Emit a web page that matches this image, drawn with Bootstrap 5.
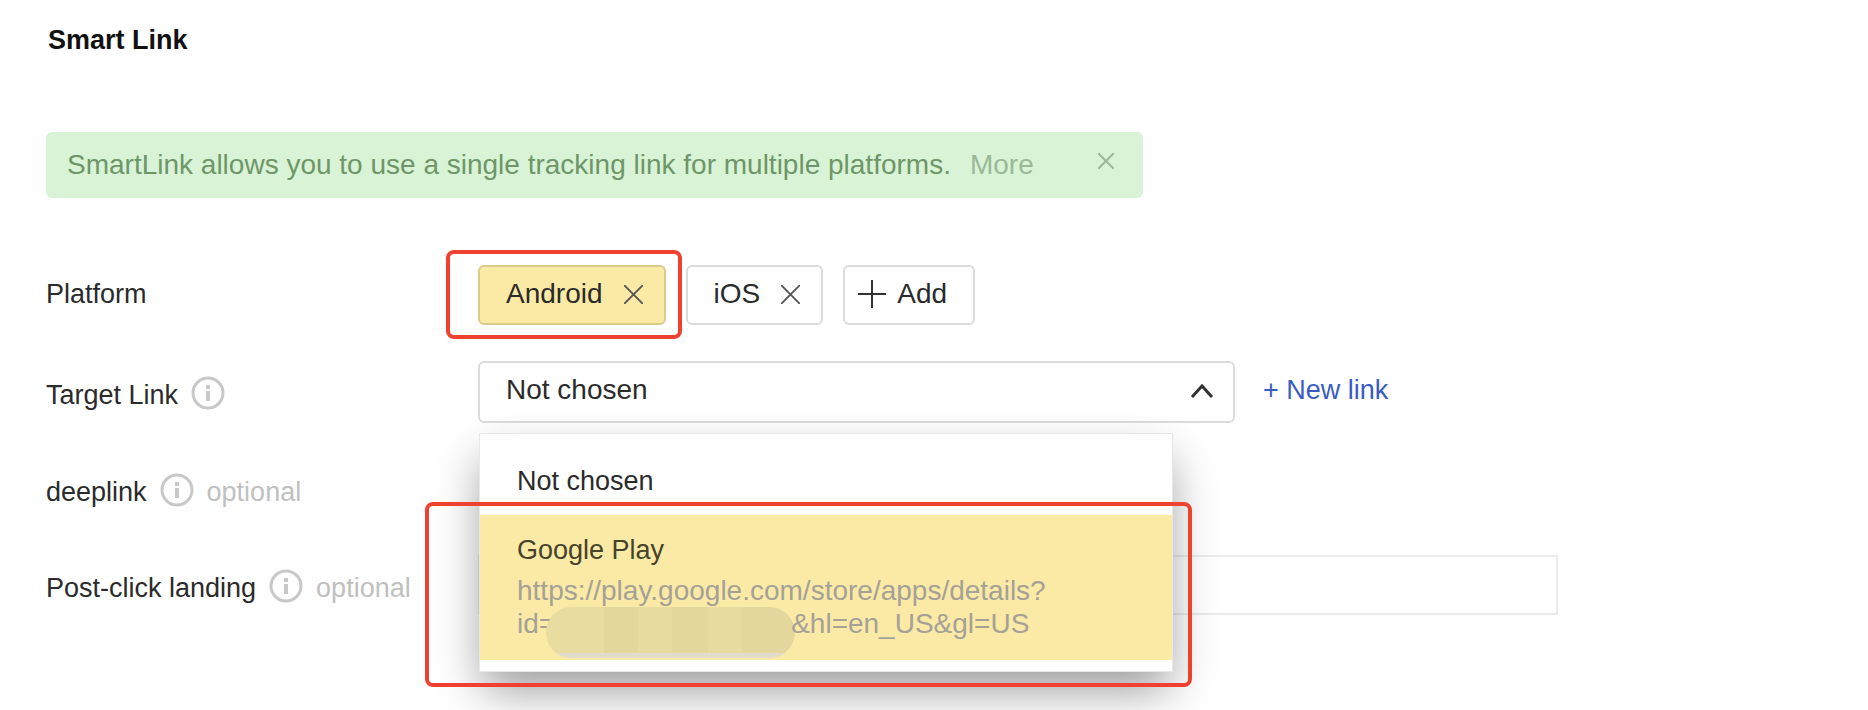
<!DOCTYPE html>
<html lang="en">
<head>
<meta charset="utf-8">
<meta name="viewport" content="width=device-width, initial-scale=1">
<title>Smart Link</title>
<link href="https://cdn.jsdelivr.net/npm/bootstrap@5.3.0/dist/css/bootstrap.min.css" rel="stylesheet">
<style>
  :root { --sun: #fbe9a6; --line: #dcdcdc; --frame: #ee4130; }
  body { font-family: "Liberation Sans", Arial, sans-serif; font-size: 27px; line-height: 32px; color: #2b2b2b; background: #fff; }
  .page { padding: 24px 46px 0; overflow: hidden; }
  .page-title { font-size: 27px; line-height: 32px; font-weight: 700; color: #111; margin: 0 0 76px 2px; }
  .notice { max-width: 1097px; min-height: 66px; padding: 0 29px 0 21px; border-radius: 6px; background: #d8f3d6; color: #6f9668; font-size: 28px; margin-bottom: 67px; }
  .notice a { color: #9cb896; margin-left: 19px; }
  .notice-close { color: #9cb896; margin-bottom: 8px; }
  .form-grid { display: grid; grid-template-columns: 432px minmax(0, 1fr); row-gap: 36px; }
  .form-grid > * { min-height: 60px; }
  .hint { color: #c0c0c0; }
  .name { gap: 13px; padding-top: 6px; }
  .name-plain { padding: 0 0 2px; }
  .name svg { margin-bottom: 5px; }
  .field { max-width: 1080px; }
  .tags { gap: 20px; }
  .tag { position: relative; height: 60px; border: 2px solid var(--line); border-radius: 6px; background: #fff; font-size: 28px; color: #2b2b2b; padding: 0 21px 2px 26px; gap: 21px; }
  .tag-on { background: var(--sun); border-color: #dccb8d; }
  .tag-add { padding: 0 26px 2px 13px; gap: 11px; }
  .framed::after { content: ""; position: absolute; border: 4px solid var(--frame); border-radius: 8px; pointer-events: none; z-index: 3; }
  .tag-on.framed::after { inset: -17px -18px -16px -34px; }
  .picker { flex: 0 1 757px; }
  .picker .form-select { height: 62px; border: 2px solid var(--line); border-radius: 6px; font-size: 28px; line-height: 32px; color: #2b2b2b; padding: 0 60px 5px 26px;
    background-image: url("data:image/svg+xml,%3Csvg xmlns='http://www.w3.org/2000/svg' viewBox='0 0 24 16'%3E%3Cpath d='M2 14 12 3 22 14' fill='none' stroke='%23333' stroke-width='3'/%3E%3C/svg%3E");
    background-size: 24px 16px; background-position: right 19px top 20px; }
  .new-link { color: #3a5cc2; margin-left: 28px; margin-bottom: 5px; }
  .choices { position: absolute; top: 72px; left: 1px; width: 694px; padding: 12px 0 11px; background: #fff; border: 1px solid #e8e8e8; box-shadow: 0 22px 44px -4px rgba(0,0,0,.4); z-index: 2; }
  .choice { position: relative; padding: 19px 37px 18px; }
  .choice-on { background: var(--sun); color: #47422a; padding: 19px 100px 14px 37px; }
  .choice-on small { display: block; font-size: 28px; line-height: 33px; color: #a5a196; margin-top: 8px; }
  .choice-on.framed::after { inset: -13px -20px -27px -55px; }
  .masked { display: inline-block; width: 249px; height: 51px; margin: -20px -4px -12px -9px; vertical-align: -13px; border-radius: 26px;
    background: linear-gradient(transparent 46px, #e2dccb 46px), linear-gradient(90deg, #e9dca0 0 58px, #e4d79e 58px 92px, #e8dba0 92px 126px, #e4d79e 126px 162px, #e8dba0 162px 196px, #e4d79e 196px); }
  .text-line { height: 60px; border: 2px solid #ebebeb; border-radius: 0; font-size: 28px; }
  svg { flex: none; display: block; }
</style>
</head>
<body>
<main class="page min-vh-100">
  <h1 class="page-title">Smart Link</h1>

  <div class="notice d-flex align-items-center" role="status">
    <span>SmartLink allows you to use a single tracking link for multiple platforms.</span>
    <a href="#" class="text-decoration-none">More</a>
    <button type="button" class="notice-close btn p-0 border-0 ms-auto" aria-label="Close">
      <svg width="16" height="16" viewBox="0 0 16 16" fill="none" stroke="currentColor" stroke-width="2"><path d="M0 0 16 16M16 0 0 16"/></svg>
    </button>
  </div>

  <form class="form-grid">
    <div class="name name-plain d-flex align-items-center">Platform</div>
    <div class="tags d-flex align-items-center">
      <button type="button" class="tag tag-on framed d-flex align-items-center">Android
        <svg width="19" height="19" viewBox="0 0 20 20" fill="none" stroke="#555" stroke-width="2"><path d="M0 0 20 20M20 0 0 20"/></svg>
      </button>
      <button type="button" class="tag d-flex align-items-center">iOS
        <svg width="19" height="19" viewBox="0 0 20 20" fill="none" stroke="#555" stroke-width="2"><path d="M0 0 20 20M20 0 0 20"/></svg>
      </button>
      <button type="button" class="tag tag-add d-flex align-items-center">
        <svg width="28" height="28" viewBox="0 0 28 28" fill="none" stroke="#333" stroke-width="2"><path d="M14 0V28M0 14H28"/></svg>
        Add
      </button>
    </div>

    <label class="name d-flex align-items-center" for="target">Target Link
      <svg width="34" height="34" viewBox="0 0 34 34" fill="none" stroke="#c8c8c8"><circle cx="17" cy="17" r="15" stroke-width="3"/><path d="M17 9V13M17 15V25" stroke-width="4"/></svg>
    </label>
    <div class="d-flex align-items-center">
      <div class="picker position-relative">
        <select id="target" class="form-select">
          <option selected>Not chosen</option>
          <option>Google Play</option>
        </select>
        <ul class="choices list-unstyled m-0">
          <li class="choice">Not chosen</li>
          <li class="choice choice-on framed">Google Play
            <small>https://play.google.com/store/apps/details?<br>id=<span class="masked"></span>&amp;hl=en_US&amp;gl=US</small>
          </li>
        </ul>
      </div>
      <a href="#" class="new-link text-decoration-none text-nowrap">+ New link</a>
    </div>

    <div class="name d-flex align-items-center">deeplink
      <svg width="34" height="34" viewBox="0 0 34 34" fill="none" stroke="#c8c8c8"><circle cx="17" cy="17" r="15" stroke-width="3"/><path d="M17 9V13M17 15V25" stroke-width="4"/></svg>
      <span class="hint">optional</span>
    </div>
    <div></div>

    <label class="name d-flex align-items-center" for="landing">Post-click landing
      <svg width="34" height="34" viewBox="0 0 34 34" fill="none" stroke="#c8c8c8"><circle cx="17" cy="17" r="15" stroke-width="3"/><path d="M17 9V13M17 15V25" stroke-width="4"/></svg>
      <span class="hint">optional</span>
    </label>
    <div class="field"><input id="landing" type="text" class="form-control text-line"></div>
  </form>
</main>
<script src="https://cdn.jsdelivr.net/npm/bootstrap@5.3.0/dist/js/bootstrap.bundle.min.js"></script>
</body>
</html>
